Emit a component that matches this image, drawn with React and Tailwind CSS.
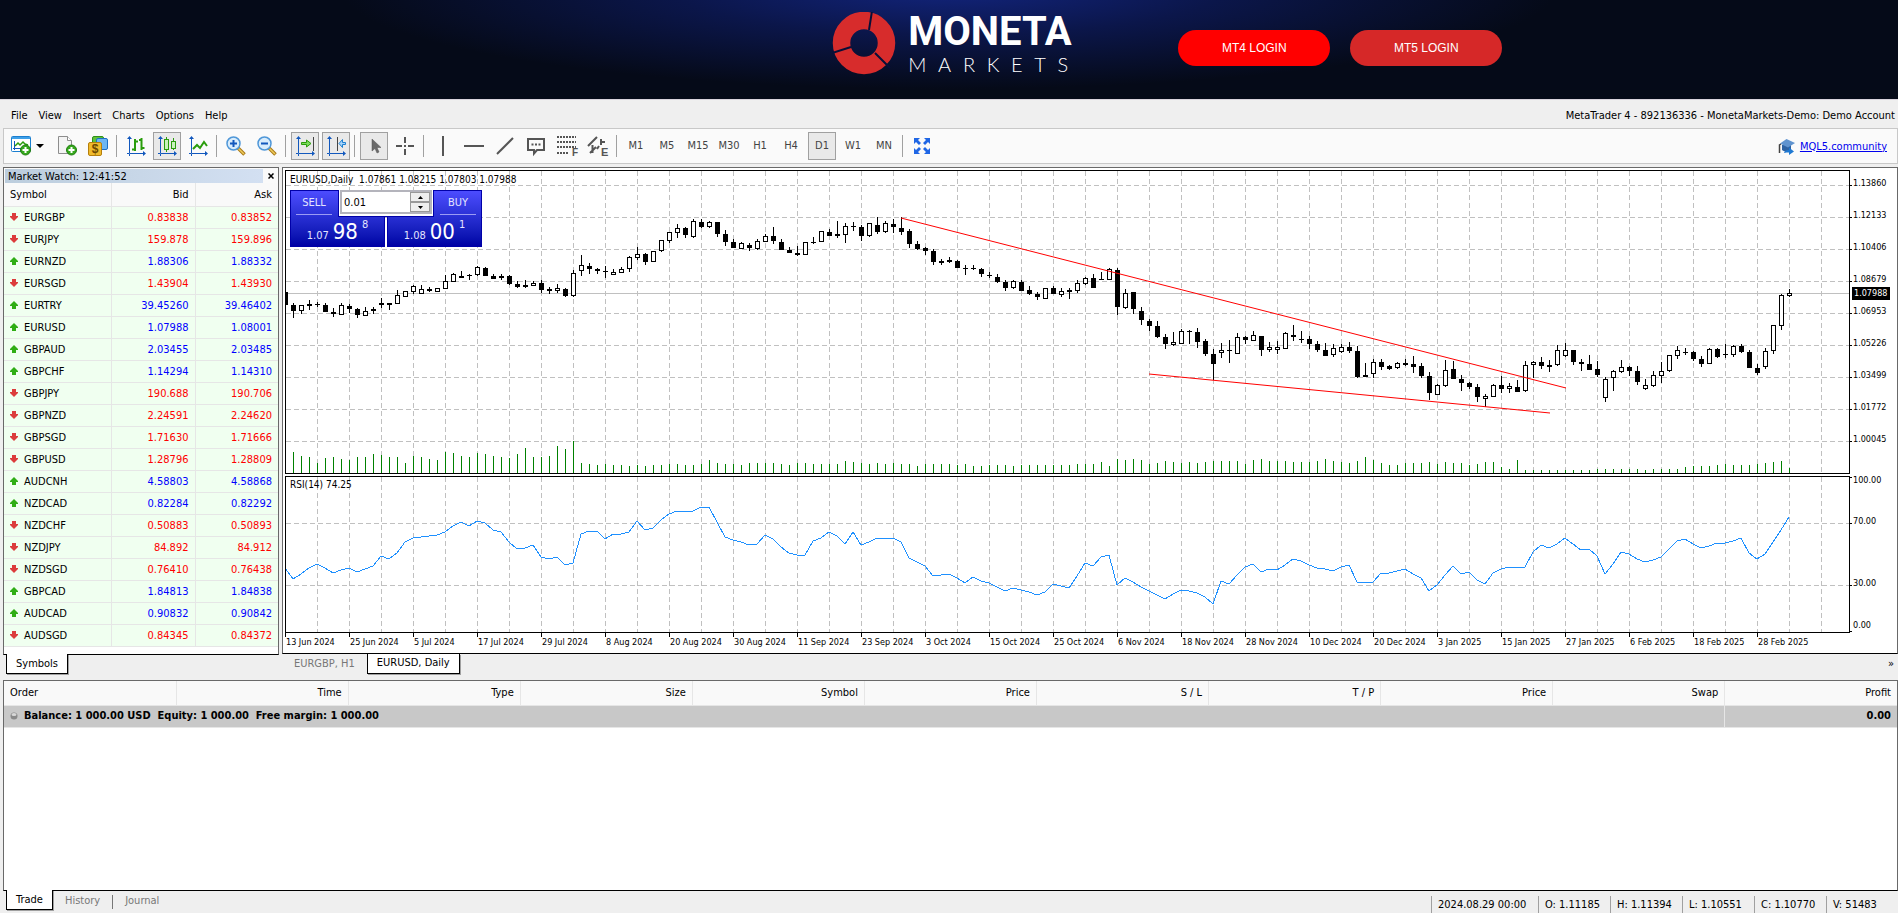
import React, { useState } from 'react'

const PRICE_STEP = 3 // quote steps per pixel, one step is 0.00018
const BAR_WIDTH = 8

const menuItems = ['File', 'View', 'Insert', 'Charts', 'Options', 'Help']
const timeframes = ['M1', 'M5', 'M15', 'M30', 'H1', 'H4', 'D1', 'W1', 'MN']

const quotes = [
  ['EURGBP', '0.83838', '0.83852', 'down'],
  ['EURJPY', '159.878', '159.896', 'down'],
  ['EURNZD', '1.88306', '1.88332', 'up'],
  ['EURSGD', '1.43904', '1.43930', 'down'],
  ['EURTRY', '39.45260', '39.46402', 'up'],
  ['EURUSD', '1.07988', '1.08001', 'up'],
  ['GBPAUD', '2.03455', '2.03485', 'up'],
  ['GBPCHF', '1.14294', '1.14310', 'up'],
  ['GBPJPY', '190.688', '190.706', 'down'],
  ['GBPNZD', '2.24591', '2.24620', 'down'],
  ['GBPSGD', '1.71630', '1.71666', 'down'],
  ['GBPUSD', '1.28796', '1.28809', 'down'],
  ['AUDCNH', '4.58803', '4.58868', 'up'],
  ['NZDCAD', '0.82284', '0.82292', 'up'],
  ['NZDCHF', '0.50883', '0.50893', 'down'],
  ['NZDJPY', '84.892', '84.912', 'down'],
  ['NZDSGD', '0.76410', '0.76438', 'down'],
  ['GBPCAD', '1.84813', '1.84838', 'up'],
  ['AUDCAD', '0.90832', '0.90842', 'up'],
  ['AUDSGD', '0.84345', '0.84372', 'down'],
]

// bull flag, high, body top, body bottom, low (steps below 1.14958)
const candles = [
  [0, 381, 381, 420, 420], [0, 414, 420, 437, 459], [1, 420, 420, 437, 446], [0, 405, 417, 422, 434],
  [0, 411, 417, 420, 426], [0, 414, 420, 440, 440], [0, 429, 440, 446, 455], [1, 414, 420, 449, 449],
  [0, 417, 423, 431, 443], [0, 429, 432, 449, 459], [1, 426, 438, 452, 452], [0, 426, 432, 438, 446],
  [0, 399, 414, 419, 429], [0, 414, 414, 419, 434], [1, 375, 390, 417, 417], [1, 378, 378, 396, 396],
  [1, 360, 363, 380, 386], [1, 360, 373, 386, 386], [0, 366, 372, 377, 381], [1, 369, 369, 381, 381],
  [1, 330, 348, 371, 371], [1, 324, 328, 351, 351], [0, 318, 333, 339, 339], [0, 327, 330, 333, 345],
  [1, 304, 307, 330, 334], [0, 306, 309, 333, 333], [0, 328, 333, 342, 342], [0, 327, 332, 338, 345],
  [0, 330, 333, 357, 360], [0, 349, 357, 366, 369], [0, 345, 360, 366, 369], [1, 349, 354, 363, 363],
  [0, 346, 354, 374, 384], [0, 366, 372, 378, 386], [1, 357, 369, 378, 384], [0, 369, 373, 393, 396],
  [1, 316, 324, 393, 396], [1, 270, 300, 318, 333], [0, 294, 303, 312, 327], [0, 309, 312, 318, 327],
  [0, 303, 318, 321, 339], [1, 312, 321, 329, 329], [1, 307, 313, 324, 324], [1, 273, 277, 312, 321],
  [1, 246, 267, 279, 284], [0, 264, 267, 291, 300], [1, 258, 258, 291, 291], [1, 225, 226, 258, 261],
  [1, 201, 202, 228, 234], [1, 177, 189, 203, 219], [0, 185, 189, 209, 219], [1, 162, 168, 216, 219],
  [0, 162, 171, 186, 189], [1, 168, 172, 186, 189], [0, 171, 171, 206, 216], [0, 195, 207, 231, 243],
  [0, 222, 231, 249, 249], [1, 231, 235, 251, 251], [0, 234, 240, 249, 258], [1, 222, 228, 251, 255],
  [1, 207, 213, 231, 231], [0, 186, 213, 228, 237], [0, 222, 231, 255, 255], [0, 246, 255, 264, 264],
  [0, 243, 264, 270, 273], [1, 231, 232, 270, 270], [0, 216, 231, 234, 237], [1, 198, 199, 231, 231],
  [0, 192, 201, 213, 213], [0, 168, 207, 213, 219], [1, 174, 183, 210, 234], [0, 171, 183, 186, 198],
  [0, 180, 186, 213, 228], [1, 174, 175, 213, 216], [0, 156, 180, 201, 207], [1, 168, 174, 201, 204],
  [0, 162, 177, 186, 204], [0, 156, 189, 201, 210], [0, 192, 198, 237, 249], [0, 228, 237, 252, 255],
  [0, 246, 249, 258, 270], [0, 252, 258, 291, 300], [0, 282, 288, 294, 300], [0, 276, 285, 291, 294],
  [0, 285, 288, 309, 309], [0, 300, 309, 312, 330], [0, 300, 309, 312, 315], [0, 309, 312, 327, 336],
  [0, 321, 330, 333, 339], [0, 327, 336, 351, 354], [0, 345, 351, 369, 378], [1, 345, 349, 369, 372],
  [0, 346, 351, 378, 378], [0, 363, 375, 387, 390], [0, 381, 387, 396, 405], [1, 369, 370, 402, 402],
  [0, 363, 369, 387, 387], [1, 369, 378, 390, 396], [0, 369, 375, 381, 402], [1, 345, 354, 378, 384],
  [1, 336, 339, 357, 360], [0, 327, 339, 369, 369], [0, 321, 342, 345, 345], [1, 309, 312, 345, 345],
  [0, 309, 315, 426, 450], [1, 372, 384, 429, 432], [0, 381, 381, 432, 447], [0, 426, 438, 465, 480],
  [0, 462, 468, 483, 498], [0, 468, 483, 516, 519], [0, 507, 516, 537, 552], [1, 501, 531, 540, 543],
  [1, 492, 498, 537, 537], [0, 495, 498, 501, 537], [0, 489, 501, 531, 549], [0, 522, 528, 567, 573],
  [0, 552, 567, 597, 645], [1, 534, 555, 564, 579], [0, 525, 555, 558, 594], [1, 504, 516, 567, 567],
  [0, 513, 516, 525, 537], [1, 498, 510, 528, 528], [0, 513, 513, 555, 573], [1, 531, 546, 555, 561],
  [1, 528, 546, 555, 567], [1, 501, 504, 551, 551], [0, 480, 510, 516, 528], [0, 498, 522, 525, 534],
  [0, 513, 522, 537, 552], [0, 528, 537, 555, 561], [0, 534, 555, 573, 573], [1, 537, 549, 570, 576],
  [1, 537, 546, 560, 564], [0, 531, 546, 558, 564], [0, 543, 558, 636, 639], [0, 594, 630, 636, 636],
  [1, 582, 591, 627, 639], [0, 582, 591, 606, 615], [0, 600, 603, 612, 615], [1, 591, 595, 609, 612],
  [0, 582, 594, 600, 603], [0, 573, 597, 606, 624], [0, 594, 603, 633, 639], [0, 621, 633, 684, 705],
  [1, 657, 660, 690, 690], [1, 585, 615, 663, 666], [0, 588, 612, 642, 642], [0, 630, 642, 654, 678],
  [0, 651, 654, 666, 672], [0, 657, 666, 696, 711], [1, 687, 693, 702, 726], [1, 657, 660, 695, 695],
  [0, 633, 660, 672, 684], [1, 654, 663, 672, 684], [0, 645, 666, 681, 681], [1, 588, 601, 678, 681],
  [1, 588, 591, 600, 639], [0, 576, 591, 603, 612], [0, 585, 600, 606, 621], [1, 540, 555, 600, 603],
  [1, 534, 555, 573, 576], [0, 555, 555, 591, 600], [0, 582, 591, 597, 618], [0, 570, 597, 615, 615],
  [0, 588, 612, 630, 636], [1, 636, 642, 699, 711], [1, 615, 618, 639, 678], [1, 585, 606, 621, 624],
  [0, 603, 606, 618, 633], [0, 603, 618, 651, 660], [1, 642, 660, 672, 675], [1, 618, 630, 663, 666],
  [1, 591, 618, 633, 654], [1, 570, 571, 618, 621], [1, 543, 555, 573, 582], [0, 549, 561, 564, 570],
  [0, 558, 561, 582, 588], [0, 573, 582, 597, 606], [1, 549, 552, 597, 597], [0, 549, 552, 576, 579],
  [0, 537, 567, 570, 579], [1, 540, 543, 570, 576], [0, 537, 543, 561, 564], [0, 555, 561, 609, 609],
  [0, 597, 609, 624, 630], [1, 549, 558, 606, 612], [1, 480, 481, 558, 567], [1, 387, 390, 483, 495],
  [1, 372, 384, 393, 396],
]

const volumes = [
  0, 21, 17, 16, 10, 15, 16, 14, 13, 16, 16, 19, 18, 16, 16, 10, 17, 16, 14, 13, 21, 20, 17, 16, 20, 19, 17, 16, 15,
  19, 25, 16, 16, 17, 27, 24, 32, 10, 9, 8, 9, 8, 8, 7, 8, 7, 8, 8, 9, 9, 8, 8, 9, 13, 10, 9, 9, 8, 10, 10, 10, 10,
  9, 8, 10, 10, 9, 9, 9, 9, 12, 11, 10, 9, 10, 9, 10, 9, 9, 7, 9, 9, 9, 9, 8, 9, 7, 7, 8, 8, 8, 7, 8, 8, 8, 8, 8, 8,
  8, 9, 9, 9, 11, 7, 14, 13, 14, 13, 9, 10, 12, 11, 10, 11, 10, 11, 12, 12, 12, 12, 9, 13, 14, 12, 12, 12, 11, 11,
  11, 12, 14, 12, 11, 10, 12, 16, 13, 10, 8, 8, 10, 10, 10, 11, 9, 11, 10, 10, 8, 9, 11, 11, 6, 4, 13, 3, 3, 3, 3,
  3, 3, 3, 3, 3, 4, 4, 4, 4, 4, 4, 3, 4, 4, 4, 4, 6, 7, 7, 7, 8, 9, 8, 8, 8, 9, 10, 11, 12, 5,
]

const rsi = [
  310, 343, 326, 308, 296, 308, 325, 316, 308, 322, 312, 303, 273, 283, 263, 231, 220, 217, 214, 211, 202, 182, 170,
  182, 169, 173, 195, 201, 232, 253, 250, 239, 277, 281, 277, 301, 295, 206, 199, 199, 222, 208, 206, 202, 169, 196,
  190, 164, 146, 139, 139, 139, 125, 125, 170, 216, 226, 230, 241, 238, 211, 221, 247, 263, 271, 271, 227, 220, 200,
  214, 238, 202, 241, 231, 220, 220, 220, 231, 280, 290, 304, 334, 331, 326, 338, 355, 335, 348, 353, 365, 379, 370,
  374, 382, 391, 381, 358, 364, 370, 333, 295, 304, 275, 271, 360, 340, 350, 367, 378, 390, 401, 386, 376, 379, 383,
  395, 418, 349, 356, 330, 305, 298, 322, 313, 316, 301, 283, 287, 301, 308, 313, 319, 305, 301, 352, 352, 352, 325,
  325, 319, 311, 326, 340, 377, 359, 331, 304, 328, 322, 346, 356, 323, 311, 307, 307, 307, 262, 241, 250, 236, 218,
  238, 256, 253, 274, 328, 298, 260, 266, 283, 292, 286, 277, 253, 227, 221, 236, 250, 244, 233, 233, 229, 220, 265,
  283, 268, 232, 194, 157,
]

const priceLabels = ['1.13860', '1.12133', '1.10406', '1.08679', '1.06953', '1.05226', '1.03499', '1.01772', '1.00045']

const dateLabels = [
  '13 Jun 2024', '25 Jun 2024', '5 Jul 2024', '17 Jul 2024', '29 Jul 2024', '8 Aug 2024', '20 Aug 2024', '30 Aug 2024',
  '11 Sep 2024', '23 Sep 2024', '3 Oct 2024', '15 Oct 2024', '25 Oct 2024', '6 Nov 2024', '18 Nov 2024', '28 Nov 2024',
  '10 Dec 2024', '20 Dec 2024', '3 Jan 2025', '15 Jan 2025', '27 Jan 2025', '6 Feb 2025', '18 Feb 2025', '28 Feb 2025',
]

const orderColumns = ['Order', 'Time', 'Type', 'Size', 'Symbol', 'Price', 'S / L', 'T / P', 'Price', 'Swap', 'Profit']

// the first bar sits on the left frame of the plot
const barX = (index) => index * BAR_WIDTH - 1

/* ---------- icons ---------- */

function Icon({ children }) {
  return (
    <svg width="20" height="20" viewBox="0 0 20 20" fill="none" className="shrink-0 overflow-visible" aria-hidden="true">
      {children}
    </svg>
  )
}

function PlusBadge() {
  return (
    <>
      <circle cx="14.500" cy="14" r="5" fill="#35a81c" stroke="#1f7d10" />
      <path d="M14.500 11v6M11.500 14h6" stroke="#fff" strokeWidth="2" />
    </>
  )
}

function Axes() {
  return (
    <>
      <path d="M3.500 2v15.500H18" stroke="#1258bd" />
      <path d="M3.500 0L6 3H1zM20 17.500L17 15v5z" fill="#1258bd" />
      <path d="M1 17.500h2M3.500 18v2" stroke="#1258bd" />
    </>
  )
}

const icons = {
  newChart: (
    <>
      <rect x=".5" y=".5" width="19" height="15" rx="1" fill="#fff" stroke="#1b7fd0" />
      <path d="M1 2h18" stroke="#3fa0e8" strokeWidth="2" />
      <path d="M3.500 14V5M2 12.500h13" stroke="#1258bd" />
      <path d="M4 10l3-3 2 2 3-3 2 2 3 1" stroke="#2a9d0c" strokeWidth="1.500" />
      <PlusBadge />
    </>
  ),
  newOrder: (
    <>
      <path d="M1.500.5h9l4 4v13h-13z" fill="#f4f4f4" stroke="#8d8d8d" />
      <path d="M10.500.5v4h4" fill="#fff" stroke="#8d8d8d" />
      <PlusBadge />
    </>
  ),
  accounts: (
    <>
      <rect x="4.500" y=".5" width="11" height="10" rx="1.500" fill="#5fc23a" stroke="#2f8f1a" />
      <rect x="8.500" y="2.500" width="11" height="11" rx="1.500" fill="#6db6f2" stroke="#1b6fc4" />
      <rect x=".5" y="6.500" width="13" height="13" rx="1.500" fill="#f0bb2c" stroke="#b57f0c" />
      <text x="7" y="17" fontSize="12" fontWeight="700" textAnchor="middle" fill="#6b4800" fontFamily="Liberation Sans, sans-serif">$</text>
    </>
  ),
  bars: (
    <>
      <Axes />
      <path d="M9 3v12M6 13.500h3M9 5.500h3M15.500 2v12M13 4h3M15.500 12h3" stroke="#2a9d0c" strokeWidth="2" />
    </>
  ),
  candles: (
    <>
      <Axes />
      <path d="M9.500 1v3M9.500 13v3M16.500 2v3M16.500 12v2" stroke="#2a9d0c" />
      <rect x="7.500" y="3.500" width="4" height="10" fill="#c9f2bd" stroke="#2a9d0c" />
      <rect x="14.500" y="5.500" width="4" height="7" fill="#c9f2bd" stroke="#2a9d0c" />
    </>
  ),
  line: (
    <>
      <Axes />
      <path d="M5 13l4-4 3 3 4-6 3 4" stroke="#2a9d0c" strokeWidth="2" />
    </>
  ),
  zoomIn: (
    <>
      <path d="M12 12l6.500 6.500" stroke="#a87918" strokeWidth="3.500" />
      <path d="M12.500 12.500l5.500 5.500" stroke="#f0cc5a" strokeWidth="1.500" />
      <circle cx="7.500" cy="7.500" r="6.500" fill="#d8ecfc" stroke="#4f97d8" strokeWidth="1.500" />
      <path d="M7.500 4v7M4 7.500h7" stroke="#1258bd" strokeWidth="2" />
    </>
  ),
  zoomOut: (
    <>
      <path d="M12 12l6.500 6.500" stroke="#a87918" strokeWidth="3.500" />
      <path d="M12.500 12.500l5.500 5.500" stroke="#f0cc5a" strokeWidth="1.500" />
      <circle cx="7.500" cy="7.500" r="6.500" fill="#d8ecfc" stroke="#4f97d8" strokeWidth="1.500" />
      <path d="M4 7.500h7" stroke="#1258bd" strokeWidth="2" />
    </>
  ),
  autoScroll: (
    <>
      <Axes />
      <path d="M18.500 1v14" stroke="#444" />
      <path d="M6.500 6.500h5V4l4.500 3.500-4.500 3.500V8.500h-5z" fill="#7bdc5c" stroke="#2a9d0c" />
    </>
  ),
  shift: (
    <>
      <Axes />
      <path d="M11.500 1v14" stroke="#444" />
      <path d="M19.500 6.500h-3v-3l-3.500 4 3.500 4v-3h3z" fill="#a8d4fa" stroke="#1b7fd0" />
    </>
  ),
  cursor: <path d="M8 3v12l3-2.500 2 4.500 2-1-2-4.500h4z" fill="#6a6a6a" stroke="#555" strokeWidth=".5" />,
  crosshair: <path d="M10 1v6M10 13v6M1 10h6M13 10h6M9 10h2" stroke="#555" strokeWidth="2" />,
  vline: <path d="M10 0v20" stroke="#555" strokeWidth="2" />,
  hline: <path d="M0 10h20" stroke="#555" strokeWidth="2" />,
  trend: <path d="M2 18L18 2" stroke="#555" strokeWidth="2" />,
  comment: (
    <>
      <path d="M2 3h16v11h-7l-3 3.500V14H2z" stroke="#555" strokeWidth="2" />
      <path d="M5.500 8.500h2M9 8.500h2M12.500 8.500h2" stroke="#555" strokeWidth="2" />
    </>
  ),
  fibo: (
    <>
      <path d="M0 1h19M0 6h19M0 11h19M0 17h11" stroke="#555" strokeWidth="2" strokeDasharray="2 1" />
      <text x="15" y="20" fontSize="10" fontWeight="700" fill="#555" fontFamily="Liberation Sans, sans-serif">F</text>
    </>
  ),
  elliott: (
    <>
      <path d="M0 10L9 1M2 17l6-6M4.500 9v8M13 3v6M13 6h4M9 13l2-3" stroke="#555" strokeWidth="2" />
      <text x="13" y="20" fontSize="11" fontWeight="700" fill="#555" fontFamily="Liberation Sans, sans-serif">E</text>
    </>
  ),
  fullscreen: (
    <path
      d="M2 2h6L6 4l3 3-2 2-3-3-2 2zM18 2h-6l2 2-3 3 2 2 3-3 2 2zM2 18h6l-2-2 3-3-2-2-3 3-2-2zM18 18h-6l2-2-3-3 2-2 3 3 2-2z"
      fill="#1f66e5"
    />
  ),
}

function ToolButton({ name, label, active }) {
  return (
    <button
      type="button"
      aria-label={label}
      className={
        active
          ? 'flex size-7 shrink-0 items-center justify-center border border-[#a0a0a0] bg-[#e9e9e9]'
          : 'flex size-7 shrink-0 items-center justify-center'
      }
    >
      <Icon>{icons[name]}</Icon>
    </button>
  )
}

function Separator() {
  return <div className="mr-[5px] ml-1 h-[22px] w-px shrink-0 bg-[#a0a0a0]" />
}

function Group({ children }) {
  return <div className="flex items-center gap-[3px]">{children}</div>
}

/* ---------- page parts ---------- */

function Logo() {
  return (
    <div className="flex w-[238px] gap-3 text-white">
      <svg width="64" height="64" viewBox="0 0 64 64" className="shrink-0" aria-hidden="true">
        <circle cx="32" cy="31" r="22.500" fill="none" stroke="#d72c2c" strokeWidth="17.500" />
        <path d="M37 18L40 -1M19 35L0 41M43 41L58 56" stroke="#080f38" strokeWidth="2" />
      </svg>
      <div className="pt-[2px]">
        <div className="font-['Roboto',sans-serif] text-[40px] leading-[36px] font-bold">MONETA</div>
        <div className="mt-1 flex w-[160px] justify-between font-['Lato',sans-serif] text-[20px] leading-[20px] font-light" aria-label="MARKETS">
          {'MARKETS'.split('').map((letter, i) => (
            <span key={i}>{letter}</span>
          ))}
        </div>
      </div>
    </div>
  )
}

function Header() {
  return (
    <header className="flex h-[100px] gap-[108px] border-b border-[#d9d3dc] bg-[#050a18] bg-[radial-gradient(ellipse_32%_100%_at_50%_-10%,#12247c_0%,#0b164a_45%,#050a18_100%)] pt-3 pl-[43.850%]">
      <Logo />
      <div className="flex gap-5 pt-[18px] font-['Liberation_Sans',sans-serif] text-xs text-white">
        <button type="button" className="h-9 w-[152px] rounded-full bg-[#ff0000]">MT4 LOGIN</button>
        <button type="button" className="h-9 w-[152px] rounded-full bg-[#d62828]">MT5 LOGIN</button>
      </div>
    </header>
  )
}

function MenuBar() {
  return (
    <div className="flex h-7 items-center justify-between pt-1 pr-[3px] pl-[11px]">
      <nav className="flex gap-[11px]">
        {menuItems.map((item) => (
          <button key={item} type="button">{item}</button>
        ))}
      </nav>
      <span>MetaTrader 4 - 892136336 - MonetaMarkets-Demo: Demo Account</span>
    </div>
  )
}

function Toolbar() {
  const [timeframe, setTimeframe] = useState('D1')

  return (
    <div className="ml-[3px] flex h-9 items-center border border-[#c8c8c8] bg-[#fafafa] pl-1">
      <Group>
        <button type="button" aria-label="New chart" className="flex h-7 w-[42px] items-center gap-[5px] pl-[3px]">
          <Icon>{icons.newChart}</Icon>
          <svg width="8" height="4" viewBox="0 0 8 4" aria-hidden="true"><path d="M0 0h8L4 4z" fill="#000" /></svg>
        </button>
        <ToolButton name="newOrder" label="New order" />
        <ToolButton name="accounts" label="Accounts" />
      </Group>
      <Separator />
      <Group>
        <ToolButton name="bars" label="Bar chart" />
        <ToolButton name="candles" label="Candlesticks" active />
        <ToolButton name="line" label="Line chart" />
      </Group>
      <Separator />
      <Group>
        <ToolButton name="zoomIn" label="Zoom in" />
        <ToolButton name="zoomOut" label="Zoom out" />
      </Group>
      <Separator />
      <Group>
        <ToolButton name="autoScroll" label="Auto scroll" active />
        <ToolButton name="shift" label="Chart shift" active />
      </Group>
      <Separator />
      <Group>
        <ToolButton name="cursor" label="Cursor" active />
        <ToolButton name="crosshair" label="Crosshair" />
      </Group>
      <Separator />
      <Group>
        <ToolButton name="vline" label="Vertical line" />
        <ToolButton name="hline" label="Horizontal line" />
        <ToolButton name="trend" label="Trendline" />
        <ToolButton name="comment" label="Text" />
        <ToolButton name="fibo" label="Fibonacci" />
        <ToolButton name="elliott" label="Elliott" />
      </Group>
      <Separator />
      <Group>
        {timeframes.map((tf) => (
          <button
            key={tf}
            type="button"
            onClick={() => setTimeframe(tf)}
            className={
              tf === timeframe
                ? 'h-7 w-7 border border-[#a0a0a0] bg-[#e9e9e9] text-[#444]'
                : 'h-7 w-7 text-[#444]'
            }
          >
            {tf}
          </button>
        ))}
      </Group>
      <Separator />
      <ToolButton name="fullscreen" label="Full screen" />
      <a href="#community" className="mr-[10px] ml-auto flex items-center gap-[5px] pt-px text-[#0000ee] underline">
        <svg width="17" height="16" viewBox="0 0 17 16" aria-hidden="true">
          <path d="M4 6v5c3 2 7 2 9 0V6z" fill="#2d62a3" />
          <path d="M8.500 0L17 4l-7 4.500L2 4.500z" fill="#5f93cf" />
          <path d="M3 5L1.500 6v8" stroke="#444" strokeWidth="1.500" fill="none" />
          <path d="M6 14c1-3 3-3 5-3V8.500l5 4-5 3.500v-2.500c-2 0-3 0-5 .5z" fill="#1e78d2" />
        </svg>
        MQL5.community
      </a>
    </div>
  )
}

function QuoteArrow({ direction }) {
  return (
    <svg width="8" height="8" viewBox="0 0 8 8" className="mr-[6px] mb-[2px] inline-block" aria-hidden="true">
      {direction === 'up' ? (
        <path d="M4 0l4 4v1H6v3H2V5H0V4z" fill="#2fae14" />
      ) : (
        <path d="M4 8L0 4V3h2V0h4v3h2v1z" fill="#dc3c3c" />
      )}
    </svg>
  )
}

function MarketWatch() {
  return (
    <section className="w-[276px] shrink-0">
      <div className="h-[488px] border border-b-black border-[#696969] bg-white">
        <div className="flex h-[15px] items-stretch bg-[#fafafa] pt-px pl-px">
          <h2 className="flex-1 bg-linear-to-r from-[#bccddd] to-[#d3e0f2] pl-[3px] leading-[15px]">Market Watch: 12:41:52</h2>
          <button type="button" aria-label="Close" className="flex w-[15px] items-center justify-center">
            <svg width="6" height="6" viewBox="0 0 6 6"><path d="M.5.5l5 5M5.500.5l-5 5" stroke="#000" strokeWidth="1.500" /></svg>
          </button>
        </div>
        <table className="w-full table-fixed border-collapse">
          <thead>
            <tr className="h-[23px] border-b border-[#e6e6e6] bg-[#f9f9f9]">
              <th className="w-[107px] border-r border-[#e6e6e6] pt-px pl-[6px] text-left font-normal">Symbol</th>
              <th className="w-[84px] border-r border-[#e6e6e6] pt-px pr-[6px] text-right font-normal">Bid</th>
              <th className="pt-px pr-[6px] text-right font-normal">Ask</th>
            </tr>
          </thead>
          <tbody>
            {quotes.map(([symbol, bid, ask, direction]) => (
              <tr
                key={symbol}
                className={
                  direction === 'up'
                    ? 'h-[22px] border-b border-[#e6e6e6] bg-[#f0fff0] text-[#0000ff]'
                    : 'h-[22px] border-b border-[#e6e6e6] bg-[#f0fff0] text-[#ff0000]'
                }
              >
                <td className="border-r border-[#e6e6e6] pt-px pl-[6px] text-black">
                  <QuoteArrow direction={direction} />
                  {symbol}
                </td>
                <td className="border-r border-[#e6e6e6] pt-px pr-[6px] text-right">{bid}</td>
                <td className="pt-px pr-[6px] text-right">{ask}</td>
              </tr>
            ))}
          </tbody>
        </table>
      </div>
      <div className="flex pl-[3px]">
        <Tab active>Symbols</Tab>
      </div>
    </section>
  )
}

function Tab({ active, children }) {
  return (
    <button
      type="button"
      className={
        active
          ? '-mt-px h-5 border border-t-0 border-black bg-white px-[9px] shadow-[1px_1px_0_#a0a0a0]'
          : 'h-5 px-3 text-[#777]'
      }
    >
      {children}
    </button>
  )
}

function VerticalGrid() {
  return Array.from({ length: 48 }, (_, i) => (
    <line key={i} x1={i * 32 + 31.5} x2={i * 32 + 31.5} y1="0" y2="100%" stroke="#c0c0c0" strokeDasharray="5 3" />
  ))
}

function HorizontalLine({ y, dashed }) {
  return <line x1="0" x2="100%" y1={y + 0.5} y2={y + 0.5} stroke="#c0c0c0" strokeDasharray={dashed ? '5 3' : undefined} />
}

function Candle({ index, data }) {
  const [bull, ...levels] = data
  const [high, top, bottom, low] = levels.map((v) => Math.round(v / PRICE_STEP) - 6)
  const x = barX(index)
  const height = Math.max(1, bottom - top)
  return (
    <g>
      <rect x={x} y={high} width="1" height={low - high} fill="#000" />
      <rect x={x - 2} y={top} width="5" height={height} fill="#000" />
      {bull === 1 && height > 2 && <rect x={x - 1} y={top + 1} width="3" height={height - 2} fill="#fff" />}
    </g>
  )
}

function PricePlot() {
  return (
    <svg className="block h-[302px] w-full" shapeRendering="crispEdges" role="img" aria-label="EURUSD daily candles">
      <VerticalGrid />
      {priceLabels.map((label, i) => (
        <HorizontalLine key={label} y={14 + i * 32} dashed />
      ))}
      <HorizontalLine y={122} />
      {volumes.map((v, i) => (
        <rect key={i} x={barX(i)} y={302 - v} width="1" height={v} fill="#008000" />
      ))}
      {candles.map((candle, i) => (
        <Candle key={i} index={i} data={candle} />
      ))}
      <g stroke="#ff0000" shapeRendering="auto">
        <line x1="615" y1="47" x2="1280" y2="217" />
        <line x1="863" y1="203" x2="1264" y2="242" />
      </g>
    </svg>
  )
}

function RsiPlot() {
  const points = rsi.map((v, i) => `${barX(i)},${Math.round(v / PRICE_STEP) - 12}`).join(' ')
  return (
    <svg className="block h-[155px] w-full" shapeRendering="crispEdges" role="img" aria-label="RSI">
      <VerticalGrid />
      <HorizontalLine y={46} dashed />
      <HorizontalLine y={108} dashed />
      <polyline points={points} fill="none" stroke="#1e90ff" />
    </svg>
  )
}

function DealPrice({ base, big, point }) {
  return (
    <span className="flex items-baseline justify-center gap-1 text-[11px] leading-[34px]">
      {base}
      <b className="text-[22px] font-normal text-white">{big}</b>
      <span className="self-start leading-5">{point}</span>
    </span>
  )
}

function OneClickTrading() {
  const [volume, setVolume] = useState('0.01')

  return (
    <div className="absolute top-[19px] left-1 flex h-[57px] w-[192px] gap-[2px] text-[11px] text-[#e4e4ff]">
      <button type="button" className="flex flex-1 flex-col border border-[#0000a8] bg-linear-to-b from-[#4c4cff] to-[#0000a4]">
        <span className="ml-[5px] w-9 border-b border-[#9c9cf4] text-center leading-[23px]">SELL</span>
        <span className="h-8 w-full"><DealPrice base="1.07" big="98" point="8" /></span>
      </button>
      <button type="button" className="flex flex-1 flex-col border border-[#0000a8] bg-linear-to-b from-[#4c4cff] to-[#0000a4]">
        <span className="mr-[5px] ml-auto w-9 border-b border-[#9c9cf4] text-center leading-[23px]">BUY</span>
        <span className="h-8 w-full"><DealPrice base="1.08" big="00" point="1" /></span>
      </button>
      <div className="absolute top-0 left-12 h-[27px] w-24 border border-t-0 border-[#0000a8] bg-white px-px">
        <div className="flex h-6 border-2 border-[#b4b4bc] bg-white text-black">
          <input
            aria-label="Volume"
            value={volume}
            onChange={(e) => setVolume(e.target.value)}
            className="w-0 flex-1 pt-[2px] pl-[2px] outline-none"
          />
          <div className="flex w-5 flex-col">
            <button type="button" aria-label="Increase" className="flex h-[10px] items-center justify-center border border-[#999] bg-[#eee]">
              <svg width="5" height="3" viewBox="0 0 5 3"><path d="M0 3h5L2.500 0z" /></svg>
            </button>
            <button type="button" aria-label="Decrease" className="flex h-[10px] items-center justify-center border border-[#999] bg-[#eee]">
              <svg width="5" height="3" viewBox="0 0 5 3"><path d="M0 0h5L2.500 3z" /></svg>
            </button>
          </div>
        </div>
      </div>
    </div>
  )
}

function Ticks({ rows, className }) {
  return (
    <svg className={className} width="3" shapeRendering="crispEdges" aria-hidden="true">
      {rows.map((y) => (
        <rect key={y} x="0" y={y} width="2" height="1" />
      ))}
    </svg>
  )
}

function ChartWindow() {
  return (
    <section className="min-w-0 flex-1">
      <div className="border border-b-black border-[#696969] bg-white pt-[2px] pl-[2px] text-[9px]">
        <div className="flex">
          <div className="relative min-w-0 flex-1 border border-black">
            <PricePlot />
            <div className="absolute top-[3px] left-1 text-[10px] leading-3 whitespace-pre">EURUSD,Daily  1.07861 1.08215 1.07803 1.07988</div>
            <OneClickTrading />
          </div>
          <div className="relative flex w-[47px]">
            <Ticks className="h-[304px]" rows={priceLabels.map((_, i) => 15 + i * 32)} />
            <div className="pt-[5px]">
              {priceLabels.map((label) => (
                <div key={label} className="h-8 leading-4">{label}</div>
              ))}
            </div>
            <div className="absolute top-[117px] left-[2px] h-[13px] w-[38px] bg-black pl-[2px] leading-[13px] text-white">1.07988</div>
          </div>
        </div>
        <div className="mt-[2px] flex">
          <div className="relative min-w-0 flex-1 border border-black">
            <RsiPlot />
            <div className="absolute top-[2px] left-1 text-[10px] leading-3">RSI(14) 74.25</div>
          </div>
          <div className="flex w-[47px]">
            <Ticks className="h-[157px]" rows={[1, 47, 109, 155]} />
            <div className="grid grid-rows-[41px_62px_42px_12px] leading-[8px]">
              <span>100.00</span>
              <span>70.00</span>
              <span>30.00</span>
              <span>0.00</span>
            </div>
          </div>
        </div>
        <div className="flex h-5 overflow-hidden whitespace-nowrap">
          {dateLabels.map((label) => (
            <div key={label} className="w-16 shrink-0">
              <div className="h-1 w-px bg-black" />
              <div className="pl-px leading-[10px]">{label}</div>
            </div>
          ))}
        </div>
      </div>
      <div className="flex items-center">
        <Tab>EURGBP, H1</Tab>
        <Tab active>EURUSD, Daily</Tab>
        <button type="button" aria-label="More charts" className="mr-1 ml-auto">»</button>
      </div>
    </section>
  )
}

function Terminal() {
  return (
    <section className="ml-[3px] flex-1 border border-b-black border-[#696969] bg-white">
      <table className="w-full table-fixed border-collapse">
        <thead>
          <tr className="h-6 border-b border-[#e6e6e6] bg-[#f9f9f9]">
            {orderColumns.map((column, i) => (
              <th
                key={i}
                className={
                  i === 0
                    ? 'border-r border-[#e6e6e6] pl-[6px] text-left font-normal'
                    : 'border-r border-[#e6e6e6] pr-[6px] text-right font-normal last:border-r-0'
                }
              >
                {column}
              </th>
            ))}
          </tr>
        </thead>
        <tbody>
          <tr className="h-[22px] border-b border-[#e6e6e6] bg-[#c8c8c8] font-bold">
            <td colSpan={10} className="border-r border-[#e6e6e6] pl-[6px] whitespace-pre">
              <svg width="8" height="8" viewBox="0 0 8 8" className="mr-[6px] inline-block" aria-hidden="true">
                <circle cx="4" cy="4" r="3.500" fill="#8a8a8a" />
                <ellipse cx="4" cy="2.500" rx="2.500" ry="1.500" fill="#d8d8d8" />
              </svg>
              Balance: 1 000.00 USD  Equity: 1 000.00  Free margin: 1 000.00
            </td>
            <td className="pr-[6px] text-right">0.00</td>
          </tr>
        </tbody>
      </table>
    </section>
  )
}

function StatusBar() {
  return (
    <footer className="flex h-[22px] justify-between pl-[6px]">
      <div className="flex items-start">
        <Tab active>Trade</Tab>
        <Tab>History</Tab>
        <div className="mt-1 h-[14px] w-px bg-[#777]" />
        <Tab>Journal</Tab>
      </div>
      <div className="mt-[5px] flex leading-[17px]">
        <span className="w-[107px] border-l border-[#a0a0a0] pl-[6px]">2024.08.29 00:00</span>
        {['O: 1.11185', 'H: 1.11394', 'L: 1.10551', 'C: 1.10770', 'V: 51483'].map((value) => (
          <span key={value} className="w-[72px] border-l border-[#a0a0a0] pl-[6px]">{value}</span>
        ))}
      </div>
    </footer>
  )
}

export default function App() {
  return (
    <div className="flex min-h-screen flex-col bg-[#efefef] font-['DejaVu_Sans_Condensed','Noto_Sans',sans-serif] text-[11px] leading-4 text-black">
      <Header />
      <MenuBar />
      <Toolbar />
      <main className="mt-[3px] mb-[6px] flex gap-[3px] pl-[3px]">
        <MarketWatch />
        <ChartWindow />
      </main>
      <Terminal />
      <StatusBar />
    </div>
  )
}
